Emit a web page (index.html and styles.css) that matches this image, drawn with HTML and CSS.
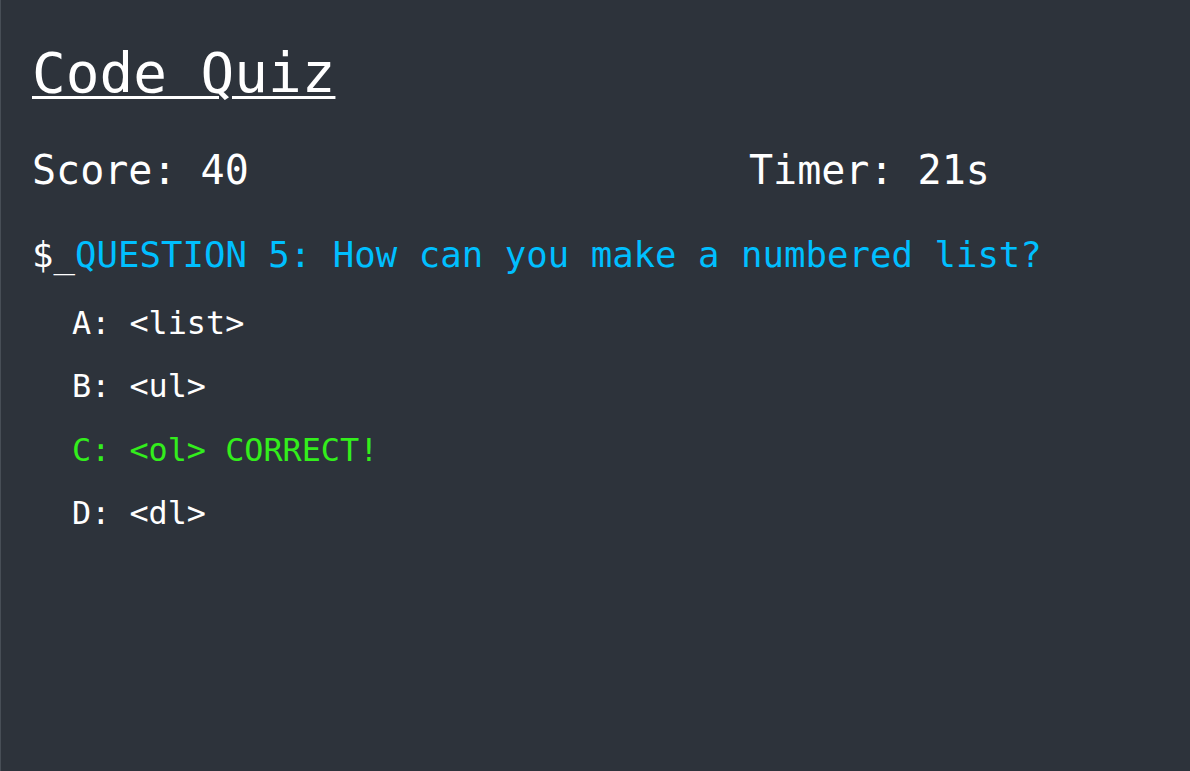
FILE: index.html
```html
<!DOCTYPE html>
<html lang="en">
<head>
<meta charset="utf-8">
<title>Code Quiz</title>
<link rel="stylesheet" href="styles.css">
</head>
<body>
<main class="page">
  <h1 class="title">Code Quiz</h1>
  <div class="stats">
    <div class="score">Score: 40</div>
    <div class="timer">Timer: 21s</div>
  </div>
  <h2 class="question"><span class="prompt">$_</span>QUESTION 5: How can you make a numbered list?</h2>
  <ul class="options">
    <li class="option">A: &lt;list&gt;</li>
    <li class="option">B: &lt;ul&gt;</li>
    <li class="option correct">C: &lt;ol&gt; CORRECT!</li>
    <li class="option">D: &lt;dl&gt;</li>
  </ul>
</main>
</body>
</html>
```
FILE: styles.css
```css
html, body {
  margin: 0;
  padding: 0;
  height: 100%;
}
body {
  background: #2d333b;
  color: #ffffff;
  font-family: "DejaVu Sans Mono", "Liberation Mono", monospace;
  border-left: 1px solid #474e56;
  box-sizing: border-box;
}
.page {
  padding: 41px 31px 0;
}
.title {
  margin: 0;
  font-size: 56px;
  line-height: 64px;
  font-weight: normal;
  text-decoration: underline;
  text-decoration-thickness: 3px;
  text-underline-offset: 4px;
}
.stats {
  margin-top: 41px;
  display: grid;
  grid-template-columns: 717px auto;
  font-size: 40px;
  line-height: 48px;
}
.question {
  margin: 39px 0 0;
  font-size: 35.7px;
  line-height: 44px;
  font-weight: normal;
  color: #00bfff;
}
.prompt {
  color: #ffffff;
}
.options {
  list-style: none;
  margin: 26px 0 0;
  padding: 0 0 0 40px;
  display: flex;
  flex-direction: column;
  gap: 23.3px;
  font-size: 31.8px;
  line-height: 40px;
}
.correct {
  color: #33ee1c;
}
```
